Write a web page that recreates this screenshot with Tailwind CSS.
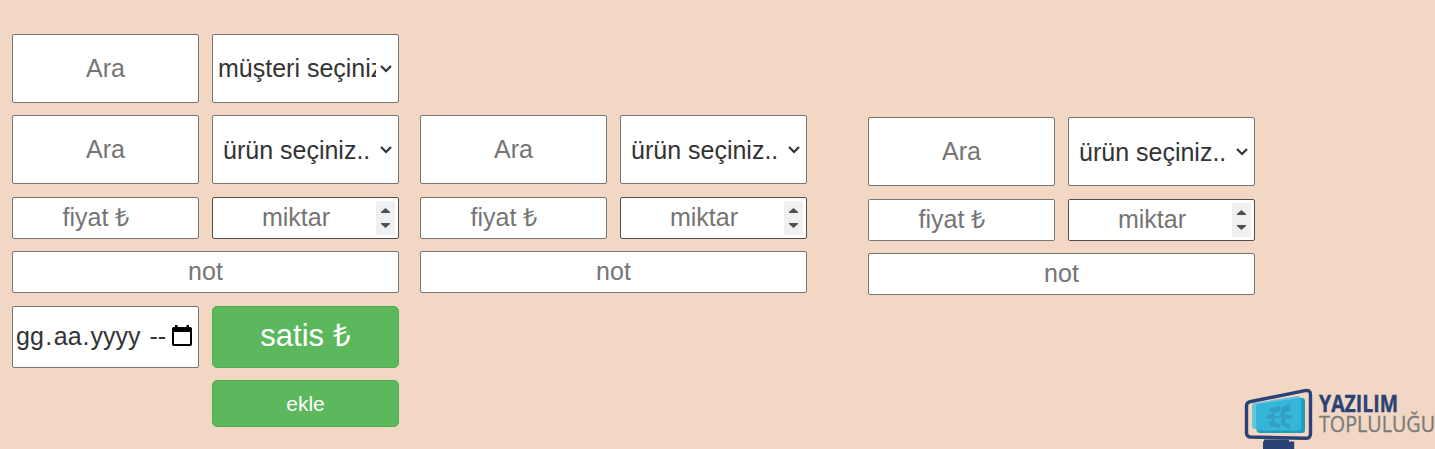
<!DOCTYPE html>
<html lang="tr">
<head>
<meta charset="utf-8">
<title>Satış</title>
<script src="https://cdn.jsdelivr.net/npm/@tailwindcss/browser@4"></script>
</head>
<body class="h-[449px] overflow-hidden bg-[#f2d7c5] font-['Liberation_Sans',Arial,sans-serif] text-[25px] leading-7 text-[#757575]">
<svg class="hidden">
  <symbol id="chevron" viewBox="0 0 12 8"><path d="M1 1 6 6l5-5" fill="none" stroke="#333" stroke-width="2.200"/></symbol>
  <symbol id="spin" viewBox="0 0 19 34"><path fill="#f0f0f0" d="M0 0h19v34H0z"/><path fill="#505050" d="M5 12h9v-1L9.500 7 5 11zM5 22h9v1l-4.500 4L5 23z"/></symbol>
</svg>
<main class="relative flex h-full items-start pl-3">
  <section class="grid w-[387px] grid-cols-2 gap-x-[13px] pt-[34px]">
    <div class="mb-3 flex h-[69px] items-center justify-center rounded-[2px] border border-[#767676] bg-white pb-[2px]">Ara</div>
    <div class="mb-3 flex h-[69px] items-center rounded-[2px] border border-[#767676] bg-white pl-[5px] text-[#333]"><span class="w-[158px] shrink-0 overflow-hidden pb-[2px] whitespace-nowrap">müşteri seçiniz</span><svg class="ml-1 h-2 w-3 shrink-0"><use href="#chevron"/></svg></div>

    <div class="mb-[13px] flex h-[69px] items-center justify-center rounded-[2px] border border-[#767676] bg-white pb-[2px]">Ara</div>
    <div class="mb-[13px] flex h-[69px] items-center rounded-[2px] border border-[#767676] bg-white pl-[10px] text-[#333]"><span class="w-[153px] shrink-0 whitespace-nowrap">ürün seçiniz..</span><svg class="ml-1 h-2 w-3 shrink-0"><use href="#chevron"/></svg></div>

    <div class="mb-3 flex h-[42px] items-center justify-center rounded-[2px] border border-[#767676] bg-white pr-[19px] pb-[2px]">fiyat ₺</div>
    <div class="mb-3 flex h-[42px] items-center rounded-[2px] border border-[#505050] bg-white pr-[3px]"><span class="flex-1 pb-[2px] pl-[3px] text-center">miktar</span><svg class="mb-[1px] h-[34px] w-[19px]"><use href="#spin"/></svg></div>

    <div class="col-span-2 mb-[13px] flex h-[42px] items-center justify-center rounded-[2px] border border-[#767676] bg-white pb-[2px]">not</div>

    <div class="mb-3 flex h-[62px] items-center rounded-[2px] border border-[#767676] bg-white pb-[2px] pl-[2px] whitespace-nowrap text-[#333]"><span class="px-px">gg</span><span class="pr-[0.5px] pl-[0.5px]">.</span><span class="px-px">aa</span>.<span class="px-px">yyyy</span><span class="ml-2">--</span><svg class="mb-[1px] ml-[6px] h-[21px] w-5 shrink-0" viewBox="0 0 20 21"><path fill="#000" fill-rule="evenodd" d="M3 0h2.500v2h9V0H17v2h1.200A1.800 1.800 0 0 1 20 3.800v15.400a1.800 1.800 0 0 1-1.800 1.800H1.800A1.800 1.800 0 0 1 0 19.200V3.800A1.800 1.800 0 0 1 1.800 2H3zM2 7v12h16V7z"/></svg></div>
    <div class="mb-3 flex h-[62px] items-center justify-center rounded-[5px] border border-[#4cae4c] bg-[#5cb85c] pb-[2px] text-[31px] text-white">satis ₺</div>
    <div class="col-start-2 flex h-[47px] items-center justify-center rounded-[5px] border border-[#4cae4c] bg-[#5cb85c] text-[21px] text-white">ekle</div>
  </section>

  <section class="ml-[21px] grid w-[387px] grid-cols-2 gap-x-[13px] pt-[115px]">
    <div class="mb-[13px] flex h-[69px] items-center justify-center rounded-[2px] border border-[#767676] bg-white pb-[2px]">Ara</div>
    <div class="mb-[13px] flex h-[69px] items-center rounded-[2px] border border-[#767676] bg-white pl-[10px] text-[#333]"><span class="w-[153px] shrink-0 whitespace-nowrap">ürün seçiniz..</span><svg class="ml-1 h-2 w-3 shrink-0"><use href="#chevron"/></svg></div>
    <div class="mb-3 flex h-[42px] items-center justify-center rounded-[2px] border border-[#767676] bg-white pr-[19px] pb-[2px]">fiyat ₺</div>
    <div class="mb-3 flex h-[42px] items-center rounded-[2px] border border-[#505050] bg-white pr-[3px]"><span class="flex-1 pb-[2px] pl-[3px] text-center">miktar</span><svg class="mb-[1px] h-[34px] w-[19px]"><use href="#spin"/></svg></div>
    <div class="col-span-2 flex h-[42px] items-center justify-center rounded-[2px] border border-[#767676] bg-white pb-[2px]">not</div>
  </section>

  <section class="ml-[61px] grid w-[387px] grid-cols-2 gap-x-[13px] pt-[117px]">
    <div class="mb-[13px] flex h-[69px] items-center justify-center rounded-[2px] border border-[#767676] bg-white pb-[2px]">Ara</div>
    <div class="mb-[13px] flex h-[69px] items-center rounded-[2px] border border-[#767676] bg-white pl-[10px] text-[#333]"><span class="w-[153px] shrink-0 whitespace-nowrap">ürün seçiniz..</span><svg class="ml-1 h-2 w-3 shrink-0"><use href="#chevron"/></svg></div>
    <div class="mb-3 flex h-[42px] items-center justify-center rounded-[2px] border border-[#767676] bg-white pr-[19px] pb-[2px]">fiyat ₺</div>
    <div class="mb-3 flex h-[42px] items-center rounded-[2px] border border-[#505050] bg-white pr-[3px]"><span class="flex-1 pb-[2px] pl-[3px] text-center">miktar</span><svg class="mb-[1px] h-[34px] w-[19px]"><use href="#spin"/></svg></div>
    <div class="col-span-2 flex h-[42px] items-center justify-center rounded-[2px] border border-[#767676] bg-white pb-[2px]">not</div>
  </section>

  <!-- watermark logo over the page's bottom right corner -->
  <svg class="absolute right-0 bottom-0 h-[69px] w-[200px] font-['Open_Sans','Noto_Sans',sans-serif]" viewBox="0 0 200 69">
    <path d="M16 21.500 70 10.700q5.500-1 5.500 4v38.800q0 5-5 4.800L15.500 57q-4-.3-4-4V26q0-4 4.500-4.500z" fill="none" stroke="#2a4275" stroke-width="3.400"/>
    <path d="M29 59.500h25v2h5.200V69H28v-7.500h1z" fill="#2a4275"/>
    <path d="m20 23 42-7q3-.4 4 2l-3 31H20q-3 0-3-3V26q0-2.700 3-3z" fill="#69c3d9"/>
    <path d="m62 19 5-1q3 0 3 3v29q0 3-3 3H25q-3 0-3.500-3z" fill="#209cba"/>
    <path d="m23.500 24 40-6q2.800-.3 2.800 2.500V48q0 2.500-3 2.500H23.500q-2.500 0-2.500-2.500V26.500q0-2.200 2.500-2.500z" fill="#35b5d9"/>
    <path d="m34 29 11-3v5l-5 2v3h5v2h-5v5l5 1v4l-11-2v-4l3-1v-2h-3l-3-2 3-3h3v-2h-3z" fill="#339fc7"/>
    <path d="m46 28 9-5v8l-5 1v3h4l4 2-4 2h-4v4l5 1v5l-9-4v-7l-2-2 2-2z" fill="#339fc7"/>
    <text x="84" y="32" textLength="79" lengthAdjust="spacingAndGlyphs" font-size="22.500" font-weight="700" fill="#2a4275" stroke="#2a4275" stroke-width=".4">YAZILIM</text>
    <text x="84" y="52" textLength="116" lengthAdjust="spacingAndGlyphs" font-size="22" fill="#7b7b78" stroke="#7b7b78" stroke-width=".35">TOPLULUĞU</text>
  </svg>
</main>
</body>
</html>
